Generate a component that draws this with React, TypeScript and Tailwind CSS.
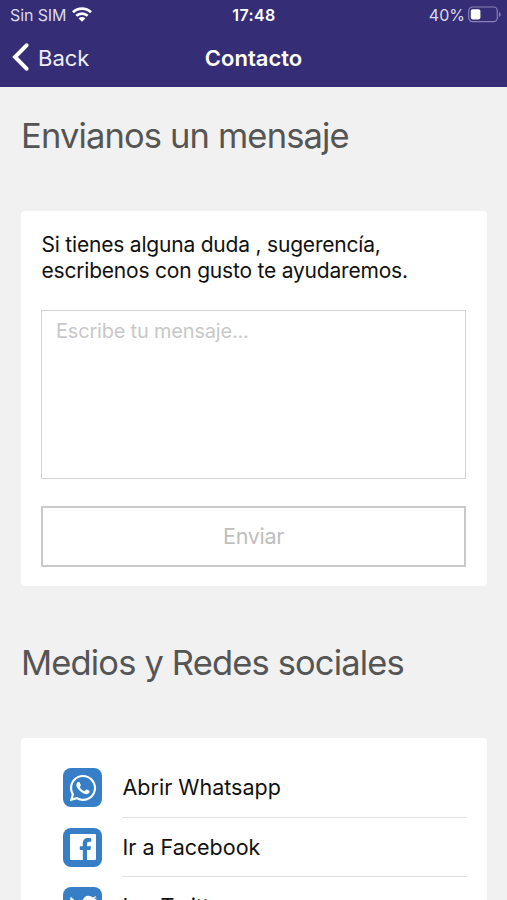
import type { ReactNode } from "react";
import { FaTwitter, FaWhatsapp } from "react-icons/fa";

function WifiIcon() {
  return (
    <svg viewBox="0 0 20 15" className="h-[15px] w-5" fill="none" stroke="white" strokeWidth="2.7">
      <path d="M1 5.3a13 13 0 0 1 18 0" />
      <path d="M4.3 8.8a8.3 8.3 0 0 1 11.4 0" />
      <path d="M10 14.8 6.6 11.4a4.8 4.8 0 0 1 6.8 0z" fill="white" stroke="none" />
    </svg>
  );
}

function BatteryIcon() {
  return (
    <svg viewBox="0 0 33 17" className="h-[17px] w-[33px]" fill="none">
      <rect x="0.7" y="1" width="28.6" height="14.6" rx="3.8" stroke="#8983b3" strokeWidth="1.2" />
      <rect x="2.8" y="3.2" width="9.6" height="10.2" rx="1.8" fill="white" />
      <path d="M31 6v5q1.7-.8 1.7-2.5T31 6z" fill="#8983b3" />
    </svg>
  );
}

function FacebookIcon() {
  return (
    <svg viewBox="0 0 26 26" className="h-[26px] w-[26px]">
      <rect width="26" height="26" rx="1" fill="white" />
      <path
        d="M12.8 26V16.1H9.8V12.3h3V9.6c0-3.6 2-5.6 5.2-5.6 1.3 0 2.5.1 3.2.2v3.5h-2.1c-1.7 0-2.1.9-2.1 2.2v2.4h4l-.6 3.8H17V26z"
        fill="#367fc6"
      />
    </svg>
  );
}

function LinkRow({ icon, label }: { icon: ReactNode; label: string }) {
  return (
    <li className="flex h-[59.5px] shrink-0 items-stretch pl-[42px] pr-[20px]">
      <div className="mt-[10px] flex h-[39px] w-[39px] items-center justify-center rounded-[8px] bg-[#367fc6] text-white">
        {icon}
      </div>
      <div className="ml-5 flex flex-1 items-center border-b border-[#e0e0e0] pl-[0.5px] text-[21.5px]">
        {label}
      </div>
    </li>
  );
}

export default function App() {
  return (
    <div className="flex h-[900px] w-[507px] flex-col overflow-hidden bg-[#f1f1f1] font-['Inter',sans-serif] text-[#111]">
      <header className="h-[87px] shrink-0 bg-[#352d75] text-white">
        <div className="grid h-[29px] grid-cols-3 items-center pl-[7px] pr-[6px] text-[16px]">
          <div className="flex items-center gap-[6px] pl-[3px] text-[#dcdaea]">
            <span className="tracking-[-0.1px]">Sin SIM</span>
            <WifiIcon />
          </div>
          <span className="text-center font-semibold tracking-[0.4px]">17:48</span>
          <div className="flex items-center justify-end gap-[3px] text-[#dcdaea]">
            <span>40%</span>
            <BatteryIcon />
          </div>
        </div>
        <div className="grid h-[58px] grid-cols-3 items-center px-3">
          <button className="flex items-center gap-[9px] text-[22px] text-[#eeedf7]">
            <svg viewBox="0 0 17 28" className="-mt-[2px] h-7 w-[17px]" fill="none" stroke="white" strokeWidth="4" strokeLinecap="round" strokeLinejoin="miter">
              <path d="M14.5 2.3 3 14l11.5 11.7" />
            </svg>
            Back
          </button>
          <h1 className="text-center text-[22px] font-semibold">Contacto</h1>
        </div>
      </header>
      <main className="flex flex-1 flex-col pl-[21px] pr-5">
        <h2 className="mt-[27px] h-[44px] text-[34.5px] leading-[44px] tracking-[-0.85px] text-[#555]">Envianos un mensaje</h2>
        <section className="mt-[53px] h-[375px] shrink-0 rounded-[4px] bg-white px-5 pt-[21px]">
          <p className="pl-[0.5px] text-[21px] leading-[26px] tracking-[-0.2px]">
            Si tienes alguna duda , sugerencía,
            <br />
            escribenos con gusto te ayudaremos.
          </p>
          <textarea
            className="mt-[26px] block h-[169px] w-[425px] resize-none border-[1.5px] border-[#d3d3d3] px-[14px] py-[6px] text-[20px] leading-[28px] tracking-[-0.2px] outline-none placeholder:text-[#c8c8c8]"
            placeholder="Escribe tu mensaje..."
          />
          <button className="mt-[27px] h-[61px] w-[425px] border-2 border-[#c9c9c9] text-[21.5px] tracking-[-0.3px] text-[#bebebe]">
            Enviar
          </button>
        </section>
        <h2 className="mt-[55px] h-[44px] shrink-0 text-[34.5px] leading-[44px] tracking-[-0.85px] text-[#555]">Medios y Redes sociales</h2>
        <ul className="mt-[53px] flex h-[162px] shrink-0 flex-col overflow-hidden rounded-t-[4px] bg-white pt-5">
          <LinkRow icon={<FaWhatsapp size={30} />} label="Abrir Whatsapp" />
          <LinkRow icon={<FacebookIcon />} label="Ir a Facebook" />
          <LinkRow icon={<FaTwitter size={28} />} label="Ir a Twitter" />
        </ul>
      </main>
    </div>
  );
}
